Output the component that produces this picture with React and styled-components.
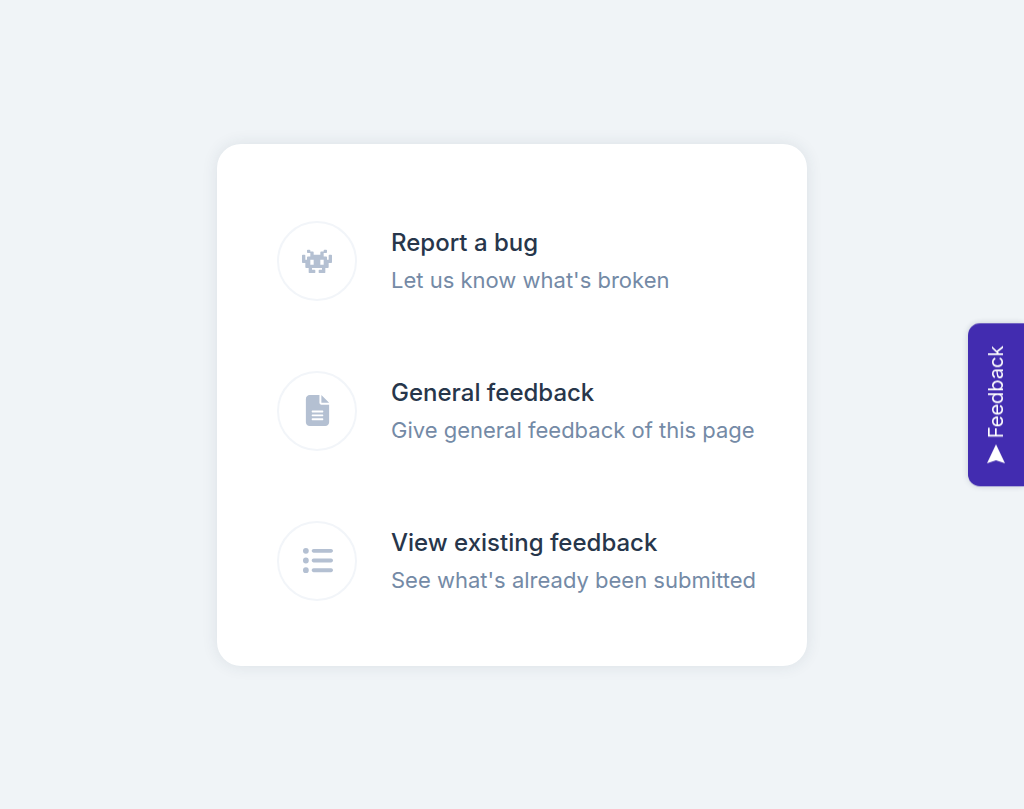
import React from "react";
import styled, { createGlobalStyle } from "styled-components";
import { FaFileLines, FaListUl } from "react-icons/fa6";

const GlobalStyle = createGlobalStyle`
  * { box-sizing: border-box; }
  body {
    margin: 0;
    background: #f0f4f7;
    font-family: Inter, "Liberation Sans", sans-serif;
  }
`;

const Page = styled.main`
  min-height: 100vh;
  display: flex;
  align-items: center;
  justify-content: center;
`;

const Card = styled.section`
  width: 100%;
  max-width: 590px;
  padding: 77px 32px 65px 60px;
  display: flex;
  flex-direction: column;
  gap: 70px;
  background: #ffffff;
  border-radius: 24px;
  box-shadow: 0 0 16px rgba(40, 60, 80, 0.1);
`;

const Option = styled.button`
  display: flex;
  align-items: center;
  gap: 34px;
  padding: 0;
  border: 0;
  background: none;
  font-family: inherit;
  text-align: left;
  cursor: pointer;
`;

const IconCircle = styled.span`
  flex: none;
  width: 80px;
  height: 80px;
  display: flex;
  align-items: center;
  justify-content: center;
  border: 2px solid #f2f5f9;
  border-radius: 50%;
  color: #b4c0d2;
`;

const OptionText = styled.span`
  display: flex;
  flex-direction: column;
  gap: 1px;
  padding-top: 2px;
  white-space: nowrap;
`;

const Title = styled.span`
  font-size: 24px;
  line-height: 36px;
  font-weight: 500;
  color: #27364b;
`;

const Description = styled.span`
  font-size: 22px;
  line-height: 36px;
  color: #748aa6;
`;

const FeedbackTab = styled.button`
  position: fixed;
  right: 0;
  top: 50%;
  transform: translateY(-50%) rotate(180deg);
  writing-mode: vertical-rl;
  display: flex;
  align-items: center;
  gap: 6px;
  width: 56px;
  padding: 23px 0 22px;
  border: 0;
  border-radius: 0 12px 12px 0;
  background: #422cb0;
  color: #ffffff;
  font-family: inherit;
  font-size: 20px;
  line-height: 24px;
  box-shadow: 0 0 6px rgba(40, 60, 80, 0.2);
  cursor: pointer;
`;

const InvaderIcon = () => (
  <svg width="30" height="24" viewBox="0 24 576 448" fill="currentColor" aria-hidden="true">
    <path
      fillRule="evenodd"
      d="M560 128H528a16 16 0 0 0-16 16v80H480V176a16 16 0 0 0-16-16H416V96h48a16 16 0 0 0 16-16V48a16 16 0 0 0-16-16H432a16 16 0 0 0-16 16V64H368a16 16 0 0 0-16 16v48H224V80a16 16 0 0 0-16-16H160V48a16 16 0 0 0-16-16H112A16 16 0 0 0 96 48V80a16 16 0 0 0 16 16h48v64H112a16 16 0 0 0-16 16v48H64V144a16 16 0 0 0-16-16H16A16 16 0 0 0 0 144V272a16 16 0 0 0 16 16H64v80a16 16 0 0 0 16 16h48v80a16 16 0 0 0 16 16h96a16 16 0 0 0 16-16V432a16 16 0 0 0-16-16H192V384H384v32H336a16 16 0 0 0-16 16v32a16 16 0 0 0 16 16h96a16 16 0 0 0 16-16V384h48a16 16 0 0 0 16-16V288h48a16 16 0 0 0 16-16V144A16 16 0 0 0 560 128ZM224 320H160V224h64Zm192 0H352V224h64Z"
    />
  </svg>
);

const ArrowIcon = () => (
  <svg width="18" height="19" viewBox="0 0 18 19" fill="currentColor" aria-hidden="true">
    <path d="M9 19L0 0L9 3L18 0Z" />
  </svg>
);

const options = [
  { title: "Report a bug", description: "Let us know what's broken", icon: <InvaderIcon /> },
  {
    title: "General feedback",
    description: "Give general feedback of this page",
    icon: <FaFileLines size={31} />,
  },
  {
    title: "View existing feedback",
    description: "See what's already been submitted",
    icon: <FaListUl size={31} />,
  },
];

export default function App() {
  return (
    <>
      <GlobalStyle />
      <Page>
        <Card aria-label="Feedback options">
          {options.map(({ title, description, icon }) => (
            <Option type="button" key={title}>
              <IconCircle>{icon}</IconCircle>
              <OptionText>
                <Title>{title}</Title>
                <Description>{description}</Description>
              </OptionText>
            </Option>
          ))}
        </Card>
      </Page>
      <FeedbackTab type="button">
        <ArrowIcon />
        Feedback
      </FeedbackTab>
    </>
  );
}
